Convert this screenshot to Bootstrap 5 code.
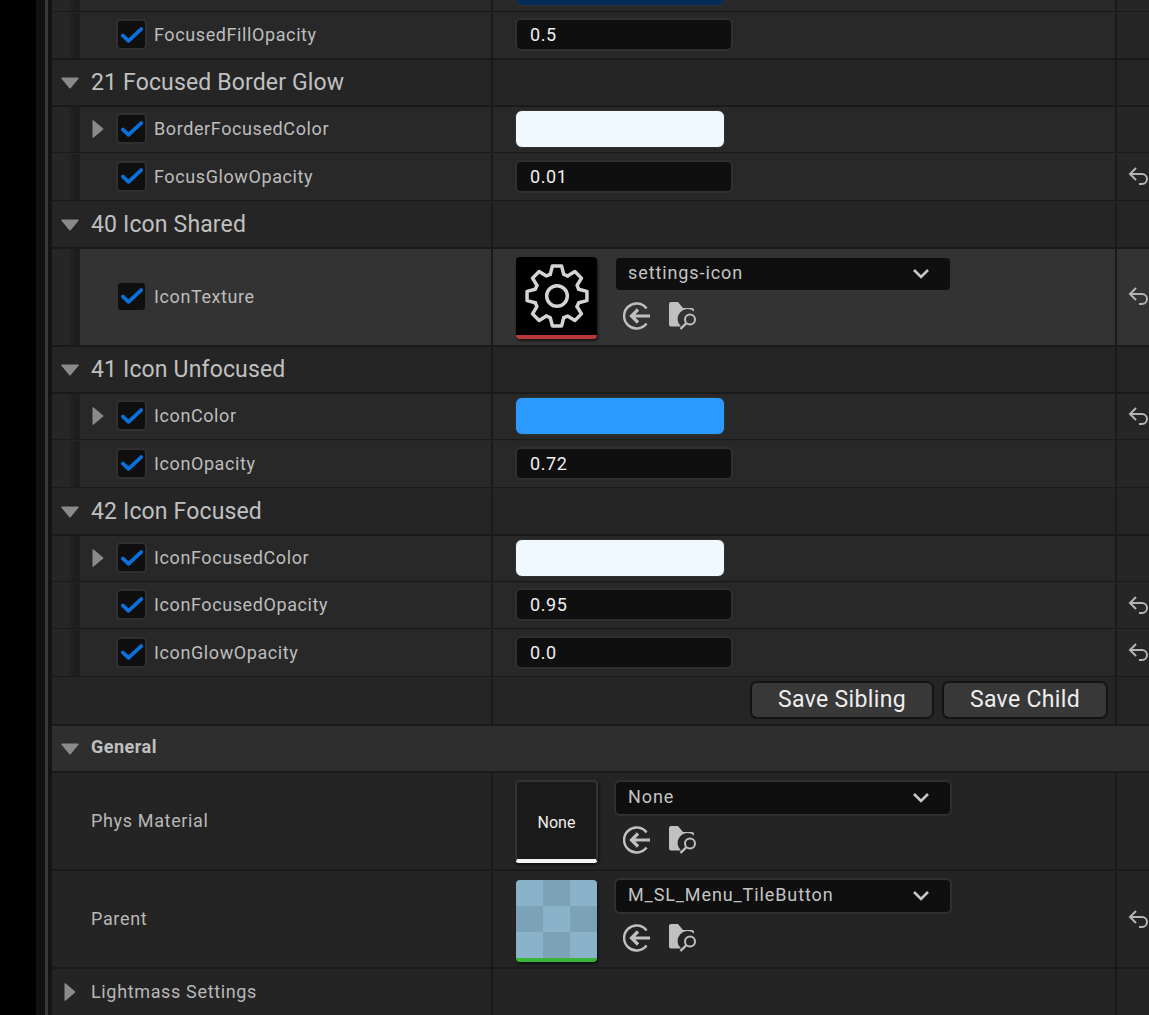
<!DOCTYPE html>
<html lang="en">
<head>
<meta charset="UTF-8">
<title>Material Instance Details</title>
<link rel="stylesheet" href="https://cdn.jsdelivr.net/npm/bootstrap@5.3.0/dist/css/bootstrap.min.css">
<style>
html, body { height: 1015px; overflow: hidden; background: #000; }
body { font-family: Roboto, "Liberation Sans", sans-serif; color: #c0c0c0; }
.gutter-a { width: 36px; background: #000; }
.gutter-b { width: 9px; background: #111; }
.gutter-c { width: 3px; background: #383838; }
.gutter-d { width: 4px; background: #141414; }
.panel { width: 1097px; background: #252525; }

.prow { border-bottom: 2px solid #1a1a1a; background: #282828; }
.thin { border-bottom-width: 1px; margin-bottom: 1px; }
.h12 { height: 12px; }
.h46 { height: 46px; }
.h47 { height: 47px; }
.h48 { height: 48px; }
.h98 { height: 98px; }
.section { background: #252525; }
.section-main { background: #2e2e2e; }
.hover { background: #333; }
.plain { background: #242424; }
.cell-name { width: 439px; }
.cell-val { width: 624px; border-left: 2px solid #1a1a1a; padding-left: 22px; }
.cell-reset { width: 34px; border-left: 2px solid #1a1a1a; overflow: hidden; background: #262626; }
.prop .cell-name, .prop .cell-val, .prop .cell-reset { padding-bottom: 2px; }
.hover .cell-reset { background: #333; }
.section .cell-reset, .plain .cell-reset { background: transparent; }
.reset-icon { margin-left: 11px; flex-shrink: 0; }
.stripes { width: 28px; align-self: stretch; margin-bottom: -2px; background: linear-gradient(90deg, #262626 0 17px, #222 17px 21px, #1e1e1e 21px); }
.arrow-slot { width: 36px; }
.check { width: 31px; height: 31px; border-radius: 5px; background: #0f0f0f; border: 2px solid #303030; }
.hover .check { border-color: #333; }
.prop-label { font-size: 18px; letter-spacing: .6px; margin-left: 7px; color: #bdbdbd; }
.sec-label { font-size: 23px; letter-spacing: .15px; color: #c0c0c0; padding-top: 1px; }
.plain-label { font-size: 18px; letter-spacing: .65px; padding-bottom: 2px; color: #b8b8b8; }
.plain-indent { padding-left: 39px; }
.main-label { font-size: 18px; letter-spacing: .5px; font-weight: 700; padding-bottom: 4px; color: #c0c0c0; }
.tri-slot { width: 36px; margin-right: 3px; }
.num-box { width: 218px; height: 33px; background: #0f0f0f; border: 2px solid #303030; border-radius: 6px; color: #f0f0f0; font-size: 18px; letter-spacing: .6px; padding-left: 13px; }
.swatch { width: 210px; height: 38px; border-radius: 7px; border: 1px solid #303030; }
.swatch-white { background: #eff9ff; }
.swatch-blue { background: #2c9bff; }
.swatch-navy { background: #042c58; height: 30px; margin-bottom: 5px; }
.thumb { align-self: flex-start; border-radius: 4px; box-shadow: 1px 2px 3px rgba(0,0,0,.6); overflow: hidden; }
.thumb-gear { width: 81px; height: 82px; margin: 8px 1px 0; background: #000; border-bottom: 4px solid #b83a3a; }
.thumb-gear svg { filter: blur(.7px); }
.thumb-none { width: 83px; height: 83px; margin-top: 7px; padding-top: 4px; background: #1a1a1a; border: 2px solid #333; border-bottom: 4px solid #f4f4f4; color: #eee; font-size: 16px; }
.thumb-tile { width: 81px; height: 82px; margin: 9px 1px 0; border-bottom: 4px solid #3ab53a; display: grid; grid-template-columns: repeat(3, 1fr); grid-template-rows: repeat(3, 1fr); }
.t1 { background: #8ab2c8; }
.t2 { background: #7ba2b6; }
.asset { margin-left: 16px; margin-top: 7px; width: 338px; align-self: flex-start; }
.combo { width: 338px; height: 36px; background: #0f0f0f; border: 2px solid #303030; border-radius: 6px; font-size: 18px; letter-spacing: .9px; padding: 0 20px 0 12px; color: #c4c4c4; }
.combo span { padding-bottom: 4px; }
.hover .combo { border-color: #333; }
.tool-row { gap: 18px; margin-top: 10px; padding-left: 9px; }
.save-cell { padding-bottom: 2px; padding-right: 7px; }
.save-btn { height: 38px; background: #383838; border: 2px solid #141414; border-radius: 7px; color: #eee; font-size: 23px; letter-spacing: .35px; line-height: 1; padding: 0 0 2px; }
.save-sib { width: 184px; }
.save-chi { width: 166px; }
</style>
</head>
<body>
<svg width="0" height="0" class="position-absolute">
  <symbol id="i-check" viewBox="0 0 20 16"><path d="M1.800 8.500 6.800 13.300 18.300 2.600" fill="none" stroke="#0a70dc" stroke-width="3.400" stroke-linecap="round" stroke-linejoin="round"/></symbol>
  <symbol id="i-down" viewBox="0 0 18 12"><path d="M1 .5h16a.7.7 0 0 1 .5 1.200L9.600 11.200a.8.8 0 0 1-1.200 0L.5 1.700A.7.7 0 0 1 1 .5z" fill="#8a8a8a"/></symbol>
  <symbol id="i-right" viewBox="0 0 12 18"><path d="M.5 1v16a.7.7 0 0 0 1.200.5l9.500-7.900a.8.8 0 0 0 0-1.200L1.700.5A.7.7 0 0 0 .5 1z" fill="#8a8a8a"/></symbol>
  <symbol id="i-reset" viewBox="0 0 22 20"><path d="M8 2 2 8l6 6M2 8h12a5 5 0 0 1 0 10h-3" fill="none" stroke="#b4b4b4" stroke-width="2"/></symbol>
  <symbol id="i-chev" viewBox="0 0 18 12"><path d="m2 2 7 7 7-7" fill="none" stroke="#c8c8c8" stroke-width="2.600"/></symbol>
  <symbol id="i-use" viewBox="0 0 28 28"><path d="M23.600 6.500A12.500 12.500 0 1 0 23.600 21.500" fill="none" stroke="#c0c0c0" stroke-width="2.400"/><path d="M15 7.500 8.500 14l6.500 6.500M9 14h18" fill="none" stroke="#c0c0c0" stroke-width="3.200"/></symbol>
  <symbol id="i-browse" viewBox="0 0 28 28"><path d="M0 2a2 2 0 0 1 2-2h7l5 6h9a2 2 0 0 1 2 2v1.500A9.500 9.500 0 0 0 12 24.500H2a2 2 0 0 1-2-2z" fill="#c0c0c0"/><circle cx="21" cy="17.500" r="5" fill="none" stroke="#c0c0c0" stroke-width="2"/><path d="m17 21.500-5.500 5.500" stroke="#c0c0c0" stroke-width="2.400"/></symbol>
  <symbol id="i-gear" viewBox="0 0 62 62">
    <g fill="none" stroke="#d4d4d4" stroke-width="3.400" stroke-linejoin="round" stroke-linecap="round">
      <path id="gear-seg" d="M24.500 10 26.500 2H35.500L37.500 10 41.250 11.550"/>
      <use href="#gear-seg" transform="rotate(45 31 31)"/>
      <use href="#gear-seg" transform="rotate(90 31 31)"/>
      <use href="#gear-seg" transform="rotate(135 31 31)"/>
      <use href="#gear-seg" transform="rotate(180 31 31)"/>
      <use href="#gear-seg" transform="rotate(225 31 31)"/>
      <use href="#gear-seg" transform="rotate(270 31 31)"/>
      <use href="#gear-seg" transform="rotate(315 31 31)"/>
      <circle cx="31" cy="31" r="10"/>
    </g>
  </symbol>
</svg>

<div class="d-flex">
  <div class="gutter-a flex-shrink-0"></div>
  <div class="gutter-b flex-shrink-0"></div>
  <div class="gutter-c flex-shrink-0"></div>
  <div class="gutter-d flex-shrink-0"></div>
  <div class="panel flex-shrink-0">

    <div class="prow thin h12 d-flex overflow-hidden">
      <div class="cell-name d-flex"><div class="stripes"></div></div>
      <div class="cell-val d-flex align-items-end"><div class="swatch swatch-navy"></div></div>
      <div class="cell-reset"></div>
    </div>

    <div class="prow prop h47 d-flex">
      <div class="cell-name d-flex align-items-center"><div class="stripes"></div><div class="arrow-slot"></div><div class="check d-flex align-items-center justify-content-center"><svg width="22" height="18"><use href="#i-check"/></svg></div><span class="prop-label">FocusedFillOpacity</span></div>
      <div class="cell-val d-flex align-items-center"><div class="num-box d-flex align-items-center">0.5</div></div>
      <div class="cell-reset"></div>
    </div>

    <div class="prow h47 section d-flex">
      <div class="cell-name d-flex align-items-center"><div class="tri-slot d-flex justify-content-center"><svg width="18" height="12"><use href="#i-down"/></svg></div><span class="sec-label">21 Focused Border Glow</span></div>
      <div class="cell-val"></div><div class="cell-reset"></div>
    </div>

    <div class="prow prop thin h46 d-flex">
      <div class="cell-name d-flex align-items-center"><div class="stripes"></div><div class="arrow-slot d-flex justify-content-center"><svg width="12" height="18"><use href="#i-right"/></svg></div><div class="check d-flex align-items-center justify-content-center"><svg width="22" height="18"><use href="#i-check"/></svg></div><span class="prop-label">BorderFocusedColor</span></div>
      <div class="cell-val d-flex align-items-center"><div class="swatch swatch-white"></div></div>
      <div class="cell-reset"></div>
    </div>

    <div class="prow prop thin h47 d-flex">
      <div class="cell-name d-flex align-items-center"><div class="stripes"></div><div class="arrow-slot"></div><div class="check d-flex align-items-center justify-content-center"><svg width="22" height="18"><use href="#i-check"/></svg></div><span class="prop-label">FocusGlowOpacity</span></div>
      <div class="cell-val d-flex align-items-center"><div class="num-box d-flex align-items-center">0.01</div></div>
      <div class="cell-reset d-flex align-items-center"><svg class="reset-icon" width="22" height="20"><use href="#i-reset"/></svg></div>
    </div>

    <div class="prow h47 section d-flex">
      <div class="cell-name d-flex align-items-center"><div class="tri-slot d-flex justify-content-center"><svg width="18" height="12"><use href="#i-down"/></svg></div><span class="sec-label">40 Icon Shared</span></div>
      <div class="cell-val"></div><div class="cell-reset"></div>
    </div>

    <div class="prow prop h98 hover d-flex">
      <div class="cell-name d-flex align-items-center"><div class="stripes"></div><div class="arrow-slot"></div><div class="check d-flex align-items-center justify-content-center"><svg width="22" height="18"><use href="#i-check"/></svg></div><span class="prop-label">IconTexture</span></div>
      <div class="cell-val d-flex">
        <div class="thumb thumb-gear d-flex align-items-center justify-content-center"><svg width="64" height="64"><use href="#i-gear"/></svg></div>
        <div class="asset">
          <div class="combo d-flex align-items-center justify-content-between"><span>settings-icon</span><svg width="18" height="12"><use href="#i-chev"/></svg></div>
          <div class="tool-row d-flex"><svg width="28" height="28"><use href="#i-use"/></svg><svg width="28" height="28"><use href="#i-browse"/></svg></div>
        </div>
      </div>
      <div class="cell-reset d-flex align-items-center"><svg class="reset-icon" width="22" height="20"><use href="#i-reset"/></svg></div>
    </div>

    <div class="prow h47 section d-flex">
      <div class="cell-name d-flex align-items-center"><div class="tri-slot d-flex justify-content-center"><svg width="18" height="12"><use href="#i-down"/></svg></div><span class="sec-label">41 Icon Unfocused</span></div>
      <div class="cell-val"></div><div class="cell-reset"></div>
    </div>

    <div class="prow prop thin h46 d-flex">
      <div class="cell-name d-flex align-items-center"><div class="stripes"></div><div class="arrow-slot d-flex justify-content-center"><svg width="12" height="18"><use href="#i-right"/></svg></div><div class="check d-flex align-items-center justify-content-center"><svg width="22" height="18"><use href="#i-check"/></svg></div><span class="prop-label">IconColor</span></div>
      <div class="cell-val d-flex align-items-center"><div class="swatch swatch-blue"></div></div>
      <div class="cell-reset d-flex align-items-center"><svg class="reset-icon" width="22" height="20"><use href="#i-reset"/></svg></div>
    </div>

    <div class="prow prop thin h47 d-flex">
      <div class="cell-name d-flex align-items-center"><div class="stripes"></div><div class="arrow-slot"></div><div class="check d-flex align-items-center justify-content-center"><svg width="22" height="18"><use href="#i-check"/></svg></div><span class="prop-label">IconOpacity</span></div>
      <div class="cell-val d-flex align-items-center"><div class="num-box d-flex align-items-center">0.72</div></div>
      <div class="cell-reset"></div>
    </div>

    <div class="prow h47 section d-flex">
      <div class="cell-name d-flex align-items-center"><div class="tri-slot d-flex justify-content-center"><svg width="18" height="12"><use href="#i-down"/></svg></div><span class="sec-label">42 Icon Focused</span></div>
      <div class="cell-val"></div><div class="cell-reset"></div>
    </div>

    <div class="prow prop thin h46 d-flex">
      <div class="cell-name d-flex align-items-center"><div class="stripes"></div><div class="arrow-slot d-flex justify-content-center"><svg width="12" height="18"><use href="#i-right"/></svg></div><div class="check d-flex align-items-center justify-content-center"><svg width="22" height="18"><use href="#i-check"/></svg></div><span class="prop-label">IconFocusedColor</span></div>
      <div class="cell-val d-flex align-items-center"><div class="swatch swatch-white"></div></div>
      <div class="cell-reset"></div>
    </div>

    <div class="prow prop thin h46 d-flex">
      <div class="cell-name d-flex align-items-center"><div class="stripes"></div><div class="arrow-slot"></div><div class="check d-flex align-items-center justify-content-center"><svg width="22" height="18"><use href="#i-check"/></svg></div><span class="prop-label">IconFocusedOpacity</span></div>
      <div class="cell-val d-flex align-items-center"><div class="num-box d-flex align-items-center">0.95</div></div>
      <div class="cell-reset d-flex align-items-center"><svg class="reset-icon" width="22" height="20"><use href="#i-reset"/></svg></div>
    </div>

    <div class="prow prop thin h47 d-flex">
      <div class="cell-name d-flex align-items-center"><div class="stripes"></div><div class="arrow-slot"></div><div class="check d-flex align-items-center justify-content-center"><svg width="22" height="18"><use href="#i-check"/></svg></div><span class="prop-label">IconGlowOpacity</span></div>
      <div class="cell-val d-flex align-items-center"><div class="num-box d-flex align-items-center">0.0</div></div>
      <div class="cell-reset d-flex align-items-center"><svg class="reset-icon" width="22" height="20"><use href="#i-reset"/></svg></div>
    </div>

    <div class="prow section h48 d-flex">
      <div class="cell-name"></div>
      <div class="cell-val save-cell d-flex align-items-center justify-content-end gap-2"><button class="btn save-btn save-sib" type="button">Save Sibling</button><button class="btn save-btn save-chi" type="button">Save Child</button></div>
      <div class="cell-reset"></div>
    </div>

    <div class="prow h47 section-main d-flex align-items-center">
      <div class="tri-slot d-flex justify-content-center"><svg width="18" height="12"><use href="#i-down"/></svg></div><span class="main-label">General</span>
    </div>

    <div class="prow plain h98 d-flex">
      <div class="cell-name d-flex align-items-center"><span class="plain-label plain-indent">Phys Material</span></div>
      <div class="cell-val d-flex">
        <div class="thumb thumb-none d-flex align-items-center justify-content-center">None</div>
        <div class="asset">
          <div class="combo d-flex align-items-center justify-content-between"><span>None</span><svg width="18" height="12"><use href="#i-chev"/></svg></div>
          <div class="tool-row d-flex"><svg width="28" height="28"><use href="#i-use"/></svg><svg width="28" height="28"><use href="#i-browse"/></svg></div>
        </div>
      </div>
      <div class="cell-reset"></div>
    </div>

    <div class="prow plain h98 d-flex">
      <div class="cell-name d-flex align-items-center"><span class="plain-label plain-indent">Parent</span></div>
      <div class="cell-val d-flex">
        <div class="thumb thumb-tile"><i class="t1"></i><i class="t2"></i><i class="t1"></i><i class="t2"></i><i class="t1"></i><i class="t2"></i><i class="t1"></i><i class="t2"></i><i class="t1"></i></div>
        <div class="asset">
          <div class="combo d-flex align-items-center justify-content-between"><span>M_SL_Menu_TileButton</span><svg width="18" height="12"><use href="#i-chev"/></svg></div>
          <div class="tool-row d-flex"><svg width="28" height="28"><use href="#i-use"/></svg><svg width="28" height="28"><use href="#i-browse"/></svg></div>
        </div>
      </div>
      <div class="cell-reset d-flex align-items-center"><svg class="reset-icon" width="22" height="20"><use href="#i-reset"/></svg></div>
    </div>

    <div class="prow plain h48 d-flex">
      <div class="cell-name d-flex align-items-center"><div class="tri-slot d-flex justify-content-center"><svg width="12" height="18"><use href="#i-right"/></svg></div><span class="plain-label">Lightmass Settings</span></div>
      <div class="cell-val"></div><div class="cell-reset"></div>
    </div>

  </div>
</div>
</body>
</html>
